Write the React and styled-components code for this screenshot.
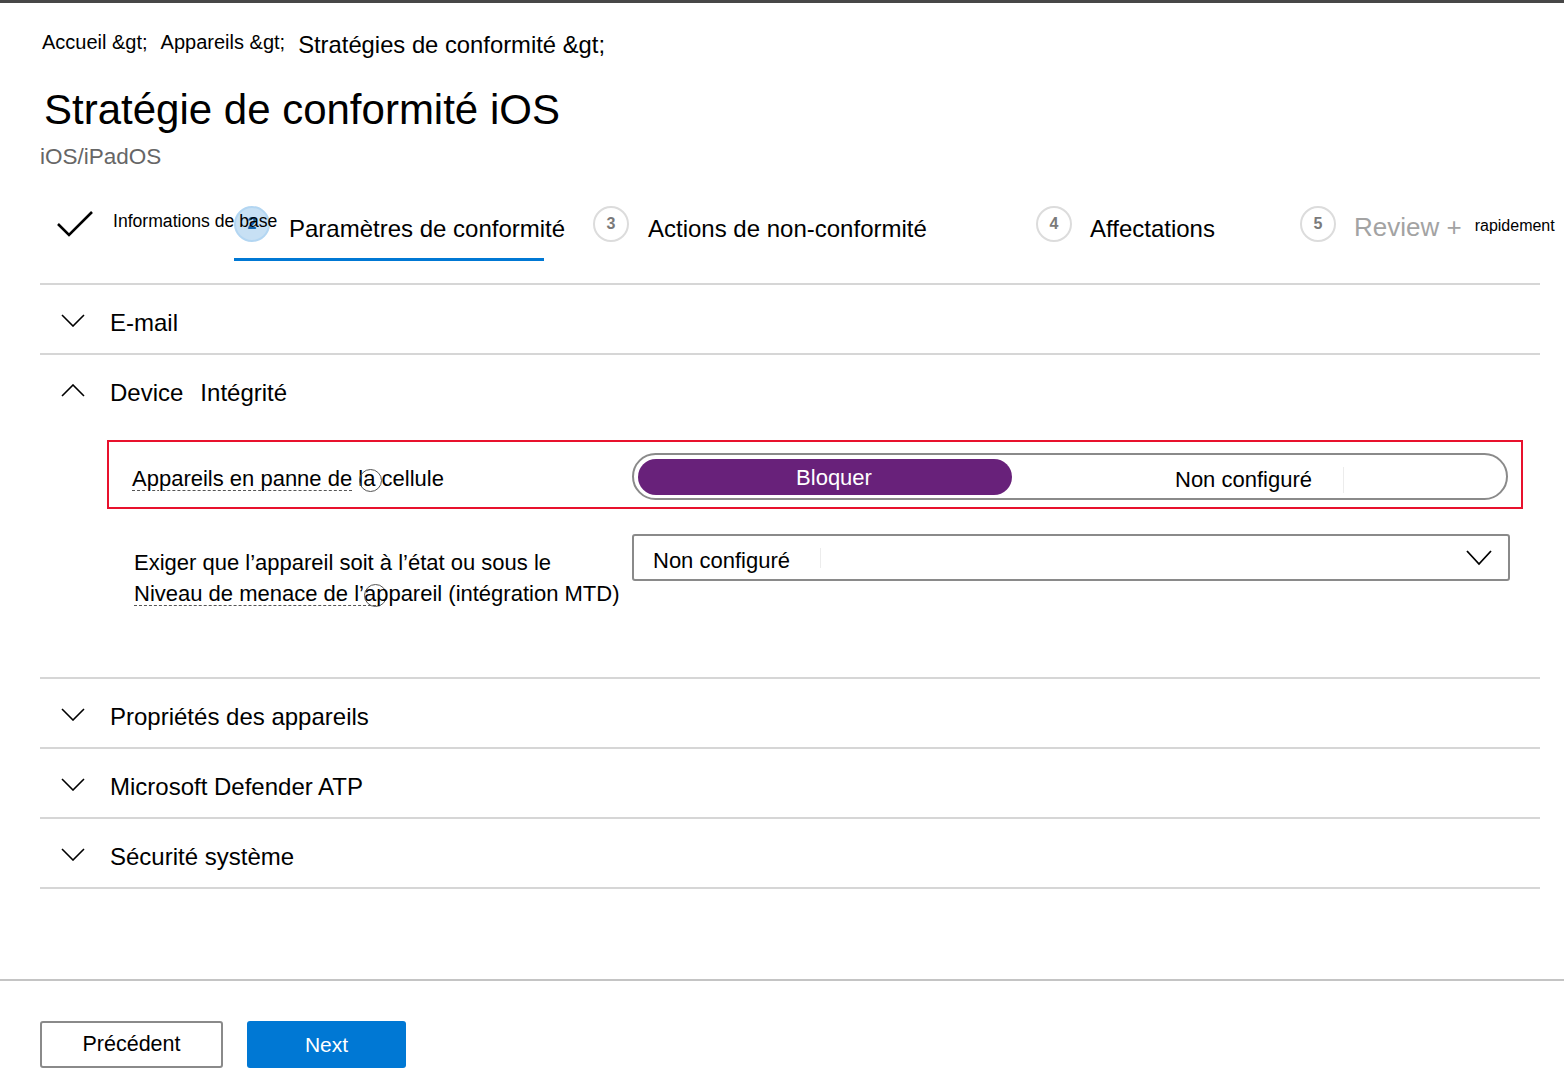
import React from "react";
import styled, { createGlobalStyle } from "styled-components";

const GlobalStyle = createGlobalStyle`
  html, body { margin: 0; padding: 0; background: #fff; }
  body { font-family: "Liberation Sans", Arial, sans-serif; color: #000; }
  * { box-sizing: border-box; }
`;

const Page = styled.div`
  width: 1564px;
  height: 1082px;
  display: flex;
  flex-direction: column;
  overflow: hidden;
`;

const TopBar = styled.div`
  height: 3px;
  flex: none;
  background: #474747;
`;

const Main = styled.main`
  flex: 1;
  padding: 0 24px 0 40px;
`;

const Breadcrumb = styled.nav`
  display: flex;
  align-items: flex-start;
  gap: 13px;
  margin-top: 28px;
  padding-left: 2px;
`;

const Crumb = styled.span`
  font-size: ${(p) => p.$size}px;
  line-height: normal;
  white-space: pre;
`;

const Title = styled.h1`
  margin: 27px 0 0 4px;
  font-size: 42px;
  font-weight: 400;
  line-height: 48px;
`;

const Subtitle = styled.div`
  margin-top: 10px;
  font-size: 22.5px;
  line-height: 26px;
  color: #666;
`;

const Steps = styled.div`
  display: flex;
  margin-top: 34px;
  padding-bottom: 22px;
  border-bottom: 2px solid #d6d6d6;
`;

const Step = styled.div`
  width: ${(p) => p.$w}px;
  flex: none;
  display: flex;
  flex-direction: column;
`;

const StepHead = styled.div`
  height: 40px;
  display: flex;
  align-items: center;
  gap: ${(p) => p.$gap}px;
  padding-left: ${(p) => p.$pad || 0}px;
  white-space: nowrap;
  & > * {
    flex: none;
  }
`;

const StepUnderline = styled.div`
  margin-top: 14px;
  height: 3px;
  width: ${(p) => p.$w}px;
  background: ${(p) => (p.$active ? "#0078d4" : "transparent")};
`;

const Circle = styled.span`
  width: 36px;
  height: 36px;
  border-radius: 50%;
  display: flex;
  align-items: center;
  justify-content: center;
  font-size: 16px;
  font-weight: 700;
  background: ${(p) => (p.$active ? "#c7e0f4" : "#fff")};
  border: 2px solid ${(p) => (p.$active ? "#b3d6f2" : "#dcdcdc")};
  color: ${(p) => (p.$active ? "#0f5fa8" : "#7a7a7a")};
`;

const StepText = styled.span`
  font-size: ${(p) => p.$size || 24}px;
  padding-top: ${(p) => p.$drop ?? 10}px;
  margin-left: ${(p) => p.$ml || 0}px;
  color: ${(p) => (p.$muted ? "#a3a3a3" : "#000")};
`;

const DoneLabel = styled.div`
  position: relative;
  z-index: 1;
  display: flex;
  flex-direction: column;
  padding-top: 2px;
`;

const DoneText = styled.span`
  font-size: 17.6px;
  line-height: 20px;
`;

const GhostStrip = styled.span`
  display: block;
  height: 4px;
  width: 70px;
  margin-top: 4px;
  overflow: hidden;
  color: #777;
  font-size: 17px;
  line-height: 20px;
  letter-spacing: 1px;
  & > span {
    display: block;
    margin-top: -15px;
  }
`;

const Section = styled.section`
  border-bottom: 2px solid #d6d6d6;
`;

const SectionHeader = styled.div`
  height: 68px;
  padding: 8px 0 0 21px;
  display: flex;
  align-items: center;
  font-size: 24px;
`;

const ChevronBox = styled.svg`
  flex: none;
  margin: 0 25px 5px 0;
`;

const HeaderWord = styled.span`
  margin-left: ${(p) => p.$gap || 0}px;
`;

const SectionBody = styled.div`
  padding: 17px 17px 59px 67px;
  display: flex;
  flex-direction: column;
  gap: 12px;
`;

const SettingRow = styled.div`
  border: 2px solid ${(p) => (p.$highlight ? "#e8112d" : "transparent")};
  padding: 11px 13px 7px 23px;
  display: grid;
  grid-template-columns: 500px 1fr;
  align-items: start;
`;

const SettingLabel = styled.div`
  padding-top: ${(p) => p.$top}px;
  padding-left: ${(p) => p.$left || 0}px;
  font-size: 22px;
  line-height: 31px;
`;

const Dashed = styled.span`
  text-decoration: underline dashed #555 1px;
  text-underline-offset: 4px;
`;

const InfoCircle = styled.span`
  display: inline-block;
  width: 23px;
  height: 23px;
  border-radius: 50%;
  border: 1.5px solid #555;
  vertical-align: -6px;
  margin: 0 ${(p) => p.$mr}px 0 ${(p) => p.$ml}px;
`;

const Toggle = styled.div`
  height: 47px;
  border: 2px solid #8a8a8a;
  border-radius: 24px;
  display: flex;
  align-items: center;
  padding: 0 4px;
`;

const ToggleOn = styled.div`
  width: 374px;
  height: 36px;
  border-radius: 18px;
  background: #68217a;
  color: #fff;
  font-size: 22px;
  display: flex;
  align-items: center;
  justify-content: center;
  padding: 2px 0 0 18px;
  flex: none;
`;

const ToggleOff = styled.div`
  flex: 1;
  display: flex;
  align-items: center;
  padding: 6px 0 0 163px;
  font-size: 22px;
`;

const FaintLine = styled.span`
  width: 1px;
  height: ${(p) => p.$h}px;
  background: #ececec;
  margin-left: ${(p) => p.$ml}px;
  flex: none;
`;

const Select = styled.div`
  height: 47px;
  margin-right: -2px;
  border: 2px solid #8a8a8a;
  border-radius: 3px;
  display: flex;
  align-items: center;
  padding: 0 16px 0 19px;
  font-size: 22px;
`;

const SelectText = styled.span`
  padding-top: 6px;
`;

const SelectChevron = styled.svg`
  margin-left: auto;
  flex: none;
`;

const Footer = styled.footer`
  flex: none;
  border-top: 2px solid #c4c4c4;
  padding: 40px 0 14px 40px;
  display: flex;
  gap: 24px;
`;

const Button = styled.button`
  height: 47px;
  width: ${(p) => p.$w}px;
  border-radius: 3px;
  font-family: "Liberation Sans", Arial, sans-serif;
  font-size: ${(p) => (p.$primary ? 21 : 21.5)}px;
  padding: 0;
  background: ${(p) => (p.$primary ? "#0078d4" : "#fff")};
  color: ${(p) => (p.$primary ? "#fff" : "#000")};
  border: ${(p) => (p.$primary ? "none" : "2px solid #8a8a8a")};
`;

const Chevron = ({ up }) => (
  <ChevronBox width="24" height="13" viewBox="0 0 24 13">
    <path
      d={up ? "M1 12 L12 1 L23 12" : "M1 1 L12 12 L23 1"}
      fill="none"
      stroke="#000"
      strokeWidth="1.6"
    />
  </ChevronBox>
);

const CheckMark = () => (
  <svg width="38" height="28" viewBox="0 0 38 28">
    <polyline points="2,14 13,25 36,2" fill="none" stroke="#000" strokeWidth="2.6" />
  </svg>
);

const collapsed = ["Propriétés des appareils", "Microsoft Defender ATP", "Sécurité système"];

export default function App() {
  return (
    <Page>
      <GlobalStyle />
      <TopBar />
      <Main>
        <Breadcrumb>
          <Crumb $size={20}>Accueil &amp;gt;</Crumb>
          <Crumb $size={20}>Appareils &amp;gt;</Crumb>
          <Crumb $size={23.8}>Stratégies de conformité &amp;gt;</Crumb>
        </Breadcrumb>
        <Title>Stratégie de conformité iOS</Title>
        <Subtitle>iOS/iPadOS</Subtitle>

        <Steps>
          <Step $w={194}>
            <StepHead $gap={19} $pad={16}>
              <CheckMark />
              <DoneLabel>
                <DoneText>Informations de base</DoneText>
                <GhostStrip>
                  <span>Basics</span>
                </GhostStrip>
              </DoneLabel>
            </StepHead>
            <StepUnderline $w={0} />
          </Step>
          <Step $w={359}>
            <StepHead $gap={19}>
              <Circle $active>2</Circle>
              <StepText>Paramètres de conformité</StepText>
            </StepHead>
            <StepUnderline $active $w={310} />
          </Step>
          <Step $w={443}>
            <StepHead $gap={19}>
              <Circle>3</Circle>
              <StepText>Actions de non-conformité</StepText>
            </StepHead>
            <StepUnderline $w={0} />
          </Step>
          <Step $w={264}>
            <StepHead $gap={18}>
              <Circle>4</Circle>
              <StepText>Affectations</StepText>
            </StepHead>
            <StepUnderline $w={0} />
          </Step>
          <Step $w={264}>
            <StepHead $gap={18}>
              <Circle>5</Circle>
              <StepText $muted $size={26} $drop={6}>Review +</StepText>
              <StepText $size={16} $drop={4} $ml={-5}>rapidement</StepText>
            </StepHead>
            <StepUnderline $w={0} />
          </Step>
        </Steps>

        <Section>
          <SectionHeader>
            <Chevron />
            <HeaderWord>E-mail</HeaderWord>
          </SectionHeader>
        </Section>

        <Section>
          <SectionHeader>
            <Chevron up />
            <HeaderWord>Device</HeaderWord>
            <HeaderWord $gap={17}>Intégrité</HeaderWord>
          </SectionHeader>
          <SectionBody>
            <SettingRow $highlight>
              <SettingLabel $top={10}>
                <Dashed>Appareils en panne de</Dashed> la
                <InfoCircle $ml={-16} $mr={-7} /> cellule
              </SettingLabel>
              <Toggle>
                <ToggleOn>Bloquer</ToggleOn>
                <ToggleOff>
                  Non configuré
                  <FaintLine $h={26} $ml={31} />
                </ToggleOff>
              </Toggle>
            </SettingRow>
            <SettingRow>
              <SettingLabel $top={13} $left={2}>
                Exiger que l’appareil soit à l’état ou sous le
                <br />
                <Dashed>Niveau de menace de l’a</Dashed>
                <InfoCircle $ml={-12} $mr={-11} />
                ppareil (intégration MTD)
              </SettingLabel>
              <Select>
                <SelectText>Non configuré</SelectText>
                <FaintLine $h={20} $ml={30} />
                <SelectChevron width="26" height="16" viewBox="0 0 26 16">
                  <path d="M1 1 L13 14 L25 1" fill="none" stroke="#000" strokeWidth="1.8" />
                </SelectChevron>
              </Select>
            </SettingRow>
          </SectionBody>
        </Section>

        {collapsed.map((name) => (
          <Section key={name}>
            <SectionHeader>
              <Chevron />
              <HeaderWord>{name}</HeaderWord>
            </SectionHeader>
          </Section>
        ))}
      </Main>
      <Footer>
        <Button $w={183}>Précédent</Button>
        <Button $primary $w={159}>Next</Button>
      </Footer>
    </Page>
  );
}
